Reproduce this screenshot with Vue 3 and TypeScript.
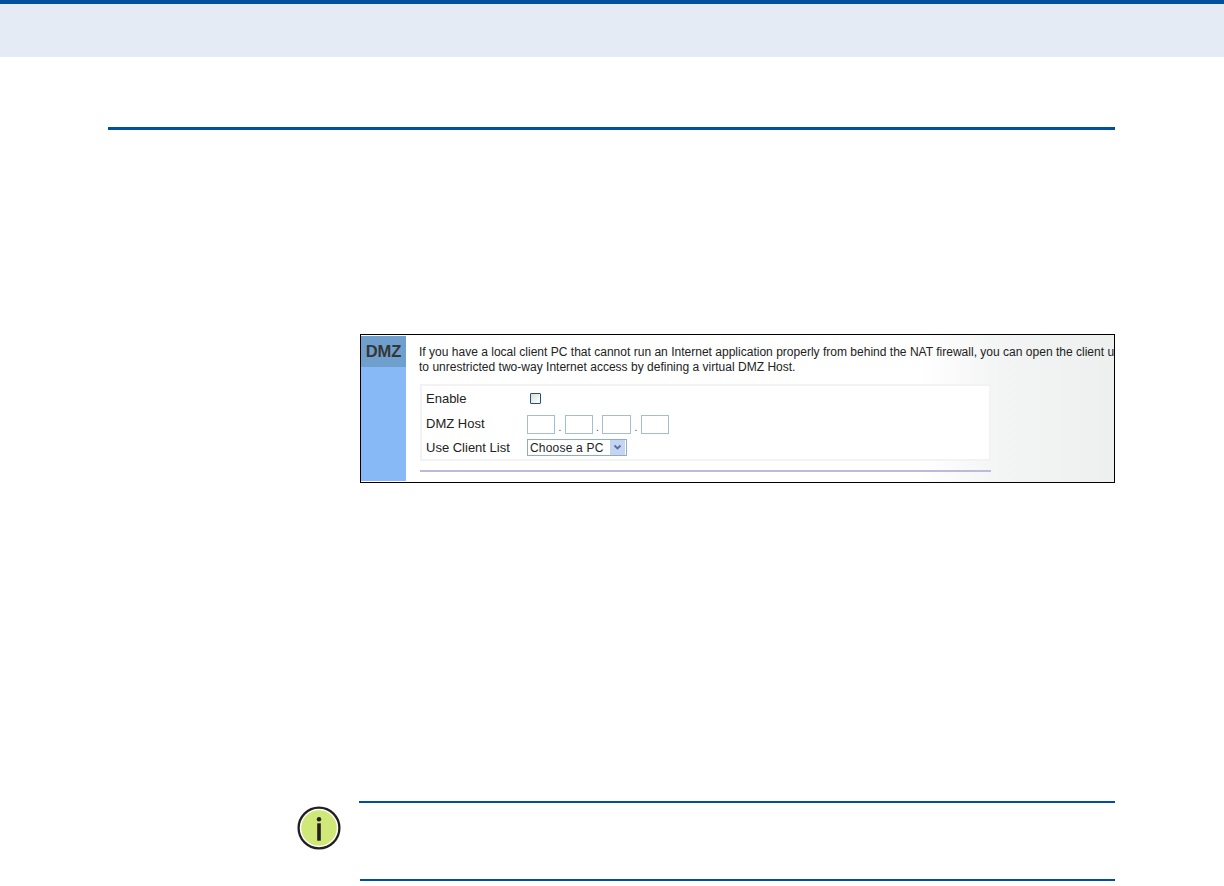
<script setup lang="ts">
const octets: number[] = [0, 1, 2, 3]
</script>

<template>
  <div class="page">
    <header class="band"></header>
    <div class="rule"></div>
    <figure class="shot">
      <aside class="side"><div class="side-head">DMZ</div></aside>
      <div class="main">
        <p class="intro">If you have a local client PC that cannot run an Internet application properly from behind the NAT firewall, you can open the client up</p>
        <p class="intro">to unrestricted two-way Internet access by defining a virtual DMZ Host.</p>
        <div class="panel">
          <div class="row row-enable">
            <span class="label">Enable</span>
            <span class="check"></span>
          </div>
          <div class="row row-host">
            <span class="label">DMZ Host</span>
            <div class="ip">
              <template v-for="i in octets" :key="i">
                <span class="octet" :class="{ wide: i === 2 }"></span>
                <span v-if="i < 3" class="dot" :class="{ tight: i === 1 }">.</span>
              </template>
            </div>
          </div>
          <div class="row row-list">
            <span class="label">Use Client List</span>
            <div class="select">
              <span class="select-text">Choose a PC</span>
              <span class="select-btn">
                <svg width="9" height="7" viewBox="0 0 9 7"><path d="M1.5 1.5 4.5 4.5 7.5 1.5" fill="none" stroke="#5a6f96" stroke-width="1.8"/></svg>
              </span>
            </div>
          </div>
        </div>
        <div class="divider"></div>
      </div>
    </figure>
    <section class="note">
      <svg class="note-icon" width="46" height="46" viewBox="0 0 46 46">
        <circle cx="23" cy="23" r="20.4" fill="#fff" stroke="#231f20" stroke-width="2.3"/>
        <circle cx="23" cy="23" r="17.8" fill="#cfe878"/>
        <circle cx="23" cy="14.3" r="2.2" fill="#231f20"/>
        <rect x="21.2" y="18.3" width="3.6" height="17.4" fill="#231f20"/>
      </svg>
      <div class="note-body">
        <div class="note-line"></div>
        <div class="note-line note-line-end"></div>
      </div>
    </section>
  </div>
</template>

<style>
html, body { margin: 0; background: #fff; }
</style>

<style scoped>
.page {
  width: 1224px;
  height: 886px;
  overflow: hidden;
  background: #fff;
  font-family: "Liberation Sans", Arial, sans-serif;
}
.band {
  height: 53px;
  border-top: 4px solid #00509f;
  background: #e4ebf4;
}
.rule {
  height: 3px;
  margin: 70px 109px 0 108px;
  background: #00509f;
}
.shot {
  display: flex;
  width: 753px;
  height: 147px;
  margin: 204px 0 0 360px;
  border: 1px solid #000;
  background: linear-gradient(90deg, #fff 0, #fff 560px, #f3f4f4 640px, #eef0ef 100%);
  overflow: hidden;
}
.side {
  flex: 0 0 45px;
  margin: 1px 0;
  background: #86b9f5;
}
.side-head {
  height: 31px;
  background: #6f9fcc;
  color: #363636;
  font-size: 16.5px;
  font-weight: 700;
  line-height: 30px;
  text-align: center;
}
.main {
  flex: 1;
  min-width: 0;
  padding: 10px 0 0 13px;
}
.intro {
  margin: 0;
  color: #222;
  font-size: 12.04px;
  line-height: 15px;
  white-space: nowrap;
}
.panel {
  box-sizing: border-box;
  width: 571px;
  height: 77px;
  margin: 9px 0 0 1px;
  padding: 0 0 0 4px;
  border: 2px solid #f3f3f3;
  background: #fff;
}
.row {
  display: flex;
  align-items: center;
  color: #222;
  font-size: 13px;
}
.row-enable { height: 24px; }
.row-host { height: 26px; padding-top: 1px; }
.row-host .label { margin-bottom: 2px; }
.row-list { height: 21px; }
.label { flex: 0 0 101px; }
.check {
  box-sizing: border-box;
  width: 11px;
  height: 11px;
  margin-left: 3px;
  border: 1px solid #1c5180;
  border-radius: 1px;
  background: linear-gradient(135deg, #dcdcd7, #fff);
}
.ip {
  display: flex;
  align-items: flex-end;
}
.octet {
  box-sizing: border-box;
  width: 28px;
  height: 19px;
  border: 1px solid #a3bdd2;
  background: #fff;
}
.octet.wide { width: 29px; }
.dot {
  width: 10px;
  color: #444;
  font-size: 10px;
  line-height: 13px;
  text-align: center;
}
.dot.tight { width: 9px; }
.select {
  box-sizing: border-box;
  display: flex;
  align-items: center;
  justify-content: space-between;
  width: 100px;
  height: 17px;
  padding: 0 1px 0 2px;
  border: 1px solid #8fabc6;
}
.select-text {
  color: #222;
  font-size: 12px;
  letter-spacing: 0.2px;
}
.select-btn {
  display: flex;
  align-items: center;
  justify-content: center;
  width: 15px;
  height: 15px;
  background: #c4d5f3;
}
.divider {
  width: 571px;
  height: 2px;
  margin: 9px 0 0 1px;
  background: #bdb8e0;
}
.note {
  display: flex;
  align-items: flex-start;
  margin: 318px 0 0 296px;
}
.note-icon {
  flex: none;
  margin: 4px 17px 0 0;
}
.note-body {
  display: flex;
  flex-direction: column;
  justify-content: space-between;
  width: 756px;
  height: 80px;
}
.note-line {
  height: 2px;
  background: #00509f;
}
.note-line-end { margin-left: 1px; }
</style>
